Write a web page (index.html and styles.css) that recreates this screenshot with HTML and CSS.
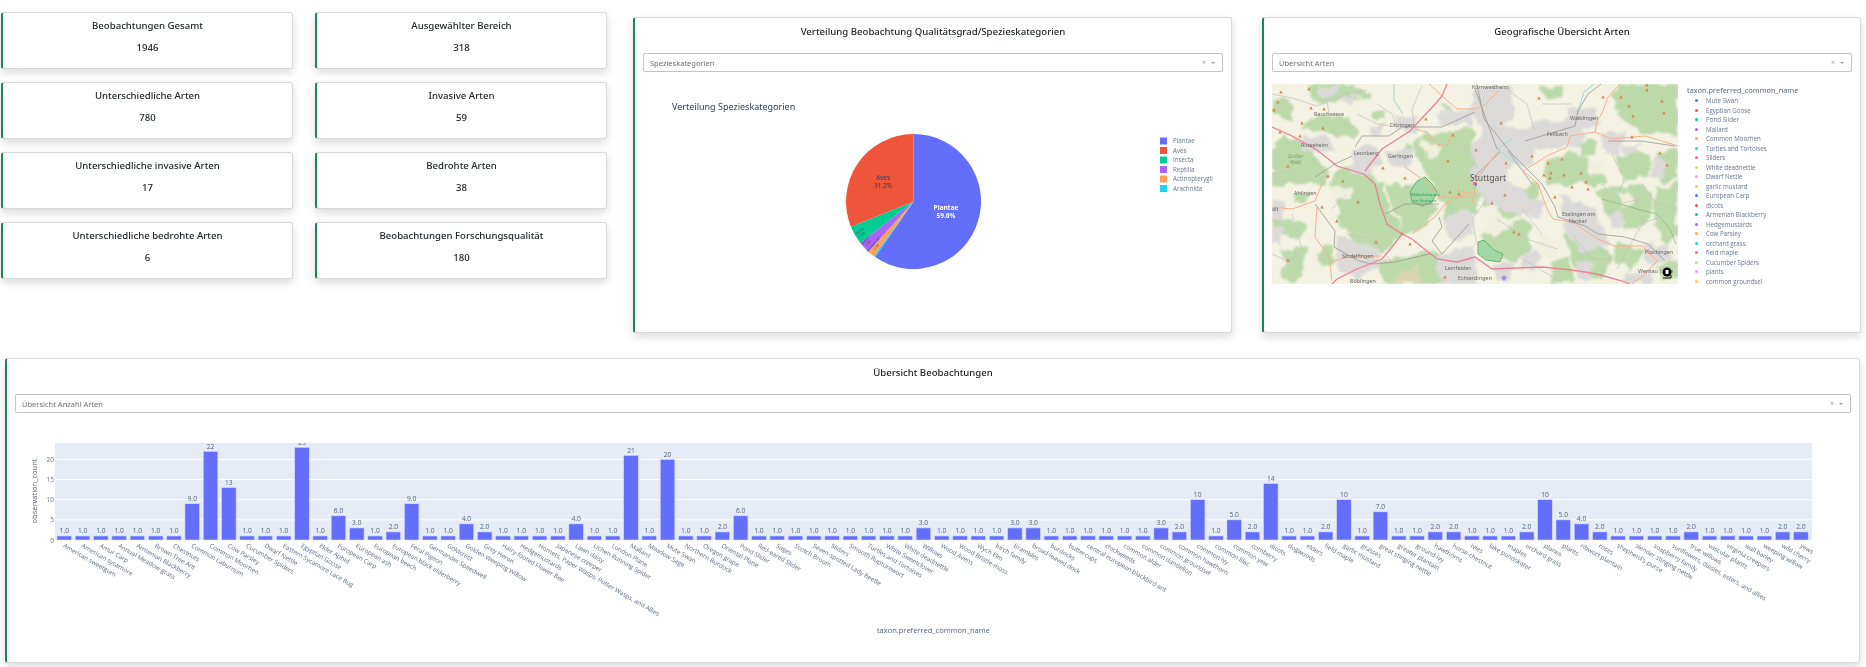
FILE: index.html
```html
<!DOCTYPE html>
<html lang="de">
<head>
<meta charset="utf-8">
<title>Beobachtungen</title>
<link rel="stylesheet" href="styles.css">
</head>
<body>
<div class="page">
  <div class="top">
    <div class="kpis">
      <div class="kpi"><div class="kpi-title">Beobachtungen Gesamt</div><div class="kpi-value">1946</div></div>
      <div class="kpi"><div class="kpi-title">Ausgewählter Bereich</div><div class="kpi-value">318</div></div>
      <div class="kpi"><div class="kpi-title">Unterschiedliche Arten</div><div class="kpi-value">780</div></div>
      <div class="kpi"><div class="kpi-title">Invasive Arten</div><div class="kpi-value">59</div></div>
      <div class="kpi"><div class="kpi-title">Unterschiedliche invasive Arten</div><div class="kpi-value">17</div></div>
      <div class="kpi"><div class="kpi-title">Bedrohte Arten</div><div class="kpi-value">38</div></div>
      <div class="kpi"><div class="kpi-title">Unterschiedliche bedrohte Arten</div><div class="kpi-value">6</div></div>
      <div class="kpi"><div class="kpi-title">Beobachtungen Forschungsqualität</div><div class="kpi-value">180</div></div>
    </div>
    <section class="card card-mid">
      <h2 class="card-title">Verteilung Beobachtung Qualitätsgrad/Spezieskategorien</h2>
      <div class="select"><span class="select-text">Spezieskategorien</span><span class="select-x">×</span><span class="select-caret"></span></div>
      <svg id="pie" class="pie" width="580" height="250" viewBox="0 0 580 250"></svg>
    </section>
    <section class="card card-mid">
      <h2 class="card-title">Geografische Übersicht Arten</h2>
      <div class="select"><span class="select-text">Übersicht Arten</span><span class="select-x">×</span><span class="select-caret"></span></div>
      <div class="geo">
        <svg class="map" width="406" height="200" viewBox="0 0 406 200">
          <defs>
            <filter id="organic" x="0" y="0" width="100%" height="100%">
              <feTurbulence type="fractalNoise" baseFrequency="0.07" numOctaves="3" seed="4" result="n"/>
              <feDisplacementMap in="SourceGraphic" in2="n" scale="13" xChannelSelector="R" yChannelSelector="G"/>
              <feGaussianBlur stdDeviation="0.8"/>
            </filter>
            <filter id="soft"><feGaussianBlur stdDeviation="0.5"/></filter>
          </defs>
          <rect class="m-land" width="406" height="200"/>
          <g filter="url(#organic)">
            <g class="m-green">
              <path d="M33,0 L82,0 L78,12 L60,20 L40,17Z"/><path d="M0,18 L10,12 L22,20 L18,35 L0,35Z"/>
              <path d="M30,48 L38,33 L62,30 L76,34 L84,46 L82,56 L68,50 L48,46Z"/><path d="M0,62 L16,50 L30,58 L46,76 L58,88 L50,100 L0,100Z"/>
              <path d="M170,22 L183,28 L183,38 L172,38Z"/><path d="M75,5 L100,8 L98,15 L80,14Z"/>
              <path d="M140,58 L160,50 L200,45 L203,100 L165,100 L150,88Z"/><path d="M355,0 L406,0 L406,48 L370,48 L345,30 L340,10Z"/>
              <path d="M270,2 L290,2 L288,14 L275,14Z"/><path d="M272,78 L300,68 L325,80 L335,100 L275,100Z"/>
              <path d="M345,72 L375,68 L378,90 L350,98Z"/><path d="M385,68 L406,66 L406,96 L390,98Z"/>
              <path d="M325,104 L368,100 L382,120 L375,140 L350,146 L332,125Z"/><path d="M382,104 L406,100 L406,150 L392,160 L384,140Z"/>
              <path d="M205,100 L240,100 L232,116 L212,122Z"/><path d="M244,104 L268,100 L262,125 L238,138 L226,128Z"/>
              <path d="M290,148 L320,160 L342,172 L332,196 L304,186Z"/>
              <path d="M210,150 L250,145 L262,165 L240,178 L215,170Z"/><path d="M55,100 L112,100 L118,130 L132,148 L118,165 L100,172 L85,165 L65,135 L68,120Z"/>
              <path d="M115,100 L150,100 L165,125 L150,145 L132,148 L120,125Z"/><path d="M165,100 L205,100 L205,130 L175,140Z"/>
              <path d="M10,165 L35,160 L32,185 L22,200 L12,195Z"/><path d="M105,180 L165,165 L185,195 L170,200 L115,200Z"/>
              <path d="M20,110 L40,105 L35,120 L20,122Z"/><path d="M212,12 L232,5 L240,18 L222,30Z"/>
              <path d="M58,100 L70,82 L100,86 L105,100Z"/><path d="M0,135 L20,132 L36,142 L25,156 L4,152Z"/>
              <path d="M280,178 L298,172 L302,198 L282,198Z"/><path d="M232,150 L250,135 L262,142 L245,158Z"/>
              <path d="M305,56 L325,58 L326,70 L308,72Z"/><path d="M345,156 L372,166 L360,186 L342,180Z"/>
              <path d="M385,182 L406,176 L406,196 L390,198Z"/><path d="M130,60 L140,62 L138,75 L128,72Z"/>
              <path d="M100,28 L112,26 L112,36 L102,36Z"/><path d="M62,160 L42,168 L50,182 L62,178Z"/>
            </g>
            <g class="m-pale">
              <path d="M212,135 L228,128 L232,146 L214,148Z"/><path d="M272,150 L290,158 L282,176 L268,168Z"/>
              <path d="M345,108 L360,106 L362,122 L348,124Z"/><path d="M60,105 L80,104 L82,114 L62,116Z"/>
              <path d="M150,58 L168,60 L164,72 L152,70Z"/><path d="M316,78 L330,76 L330,92 L318,92Z"/>
            </g>
            <path class="m-brown" d="M120,195 L145,182 L147,200 L122,200Z"/>
            <g class="m-urban">
              <path d="M202,8 L238,2 L242,30 L230,45 L262,45 L262,80 L240,78 L232,100 L255,105 L258,132 L235,128 L204,112 L198,75 L208,45 L198,25Z"/>
              <path d="M262,38 L305,35 L315,50 L300,65 L262,65Z"/><path d="M295,22 L322,25 L328,40 L310,45 L296,38Z"/>
              <path d="M120,30 L145,33 L145,48 L125,46Z"/><path d="M80,65 L100,60 L110,80 L90,90 L78,85Z"/>
              <path d="M112,65 L140,68 L135,85 L115,80Z"/><path d="M165,30 L200,25 L200,42 L170,42Z"/>
              <path d="M30,55 L58,52 L60,68 L35,68Z"/><path d="M65,150 L105,165 L108,180 L85,195 L65,185Z"/>
              <path d="M165,170 L203,165 L203,200 L170,200Z"/><path d="M288,112 L322,125 L338,162 L312,168 L292,148Z"/>
              <path d="M370,162 L395,160 L400,178 L375,180Z"/><path d="M350,190 L380,188 L378,200 L350,200Z"/>
              <path d="M0,118 L12,118 L10,135 L0,135Z"/><path d="M330,50 L350,52 L348,72 L332,70Z"/>
              <path d="M0,140 L14,145 L8,160 L0,158Z"/><path d="M172,135 L198,122 L202,148 L182,158Z"/>
              <path d="M48,2 L70,3 L62,14 L48,10Z"/><path d="M258,115 L272,118 L268,134 L256,130Z"/>
              <path d="M338,130 L350,126 L352,140 L340,144Z"/><path d="M306,178 L322,178 L318,196 L304,196Z"/>
              <path d="M70,12 L82,10 L82,20 L70,20Z"/><path d="M100,42 L112,40 L112,52 L102,52Z"/>
              <path d="M250,172 L266,166 L268,182 L252,186Z"/><path d="M220,182 L240,178 L240,194 L222,196Z"/>
              <path d="M380,75 L392,72 L394,90 L380,92Z"/><path d="M350,60 L370,60 L368,70 L352,70Z"/>
            </g>
          </g>
          <g filter="url(#soft)">
            <path class="m-park" d="M145,97 L153,93 L160,100 L165,108 L160,118 L150,122 L140,118 L138,108Z"/>
            <path class="m-park" d="M206,158 L212,156 L222,166 L231,170 L228,178 L214,176 L206,170Z"/>
            <path class="m-border" d="M330,115 L365,125 L385,130 L398,145 L404,160"/>
            <path class="m-water" d="M122,0 L122,16 L131,30"/>
            <path class="m-water" d="M305,30 L312,8 L322,0"/>
            <path class="m-water" d="M240,55 L225,65 L245,80"/>
            <g class="m-minor">
              <path d="M0,10 L20,14 L45,22 L75,10 L95,6"/><path d="M85,30 L105,40 L118,42"/><path d="M55,18 L58,34"/>
              <path d="M10,60 L30,58"/><path d="M0,90 L20,86 L30,100"/><path d="M105,20 L120,30 L125,45"/>
              <path d="M150,2 L140,25 L143,45"/><path d="M182,60 L200,70 L205,85"/><path d="M230,2 L255,20 L262,45"/>
              <path d="M270,20 L300,20"/><path d="M340,70 L352,95 L345,115"/><path d="M330,100 L345,120 L370,115"/>
              <path d="M370,100 L385,120 L403,125"/><path d="M300,150 L320,175 L340,175"/><path d="M285,165 L255,155 L225,135"/>
              <path d="M250,125 L270,150"/><path d="M215,115 L200,135 L205,160"/><path d="M180,130 L170,105"/>
              <path d="M120,178 L100,155 L75,150"/><path d="M20,130 L30,165 L10,185"/><path d="M0,170 L18,178"/>
              <path d="M75,110 L60,125"/><path d="M345,185 L370,140 L395,130"/><path d="M240,168 L285,196"/>
            </g>
            <g class="m-rail">
              <path d="M83,63 L90,52 L117,52 L130,43 L170,43 L203,28"/><path d="M43,93 L63,80 L80,72"/>
              <path d="M43,120 L63,147 L62,163 L87,177 L100,180 L123,178 L157,170"/><path d="M113,130 L133,120 L167,120"/>
              <path d="M167,133 L170,143 L160,157 L170,170 L197,140"/><path d="M253,57 L303,42 L306,27 L316,10 L329,0"/>
              <path d="M336,57 L369,57 L403,62"/><path d="M203,5 L225,65"/><path d="M270,100 L283,123 L286,133 L313,142 L326,150 L353,153 L376,160 L393,177"/>
              <path d="M236,67 L260,100"/><path d="M228,68 L200,95"/><path d="M205,0 L212,35 L240,70 L270,100"/>
            </g>
            <g class="m-orange">
              <path d="M157,0 L170,12 L185,25 L203,25 L213,21 L223,10 L227,7"/><path d="M143,45 L155,48 L165,60 L175,62 L180,50"/>
              <path d="M133,83 L157,100 L165,110 L168,115"/><path d="M348,0 L336,13 L331,27 L325,38 L323,48 L298,52 L295,63 L275,72 L251,87"/>
              <path d="M323,48 L340,55 L360,53 L373,52 L390,57 L406,62"/><path d="M251,87 L266,100 L276,127 L281,135 L300,138 L326,155 L343,162 L370,162 L385,177 L373,190 L360,200"/>
              <path d="M45,123 L43,153 L57,173 L60,197"/><path d="M0,123 L20,125 L43,117 L50,100"/><path d="M58,178 L80,172 L110,172"/>
              <path d="M140,150 L163,133 L173,120 L200,107"/><path d="M167,113 L203,113"/><path d="M228,65 L205,95 L200,120"/>
              <path d="M186,100 L186,107 L205,110"/>
            </g>
            <g class="m-motor">
              <path d="M0,43 L20,52 L45,66 L65,82 L75,85 L92,90 L103,100 L108,120 L115,140 L130,150 L140,155 L165,175 L185,178 L203,173 L220,185 L245,184 L270,183 L300,186 L325,190 L350,197 L358,200"/>
              <path d="M93,87 L110,65 L138,47 L165,18 L170,12 L175,0"/><path d="M130,150 L120,163 L110,175 L85,185 L65,195 L60,200"/>
            </g>
            <g class="m-label">
              <text x="200" y="5">Kornwestheim</text><text x="298" y="36">Waiblingen</text><text x="275" y="52">Fellbach</text>
              <text x="118" y="43">Ditzingen</text><text x="116" y="74">Gerlingen</text><text x="82" y="71">Leonberg</text>
              <text x="29" y="63">Rutesheim</text><text x="42" y="32">Rauchwiese</text><text x="22" y="111">Ahlingen</text>
              <text x="70" y="174">Sindelfingen</text><text x="78" y="199">Böblingen</text><text x="173" y="186">Leinfelden</text>
              <text x="186" y="196">Echterdingen</text><text x="290" y="132">Esslingen am</text><text x="297" y="139">Neckar</text>
              <text x="373" y="170">Plochingen</text><text x="366" y="189">Wernau | B|a</text><text x="16" y="74" class="m-wood">Großer</text><text x="18" y="80" class="m-wood">Wald</text>
              <text x="139" y="112" class="m-parktext">Wildschutzpark</text><text x="141" y="118" class="m-parktext">bei Stuttgart</text>
              <text x="198" y="97" class="m-city">Stuttgart</text><text x="0" y="127">alt</text>
            </g>
            <g id="markers" class="m-marker"></g>
            <rect x="201" y="98" width="3" height="3" class="m-pink"/><rect x="203" y="99" width="2" height="3" class="m-blue"/>
            <path d="M232,191 L235,194 L232,197 L229,194Z" class="m-purple"/>
          </g>
          <circle cx="395" cy="188" r="4.5"/>
          <rect x="393.5" y="186" width="3" height="4" class="m-icon-in"/>
          <path d="M391,194 H399 V191" class="m-icon-corner"/>
        </svg>
        <div class="geo-legend">
          <div class="geo-legend-title">taxon.preferred_common_name</div>
          <ul id="geoLegend" class="geo-list"></ul>
        </div>
      </div>
    </section>
  </div>
  <section class="card card-wide">
    <h2 class="card-title">Übersicht Beobachtungen</h2>
    <div class="select"><span class="select-text">Übersicht Anzahl Arten</span><span class="select-x">×</span><span class="select-caret"></span></div>
    <svg id="bars" class="bars" width="1835" height="242" viewBox="0 0 1835 242"></svg>
  </section>
</div>
<script src="charts.js"></script>
</body>
</html>
```
FILE: styles.css
```css
* { box-sizing: border-box; }
html, body { margin: 0; padding: 0; background: #fff; }
body { font-family: "Noto Sans", "Open Sans", sans-serif; color: #212529; overflow: hidden; }
.page { width: 1866px; height: 667px; overflow: hidden; filter: blur(0.3px); }
.top { display: flex; align-items: flex-start; height: 358px; padding: 12px 0 0 1px; }
.kpis { display: grid; grid-template-columns: 292px 292px; column-gap: 22px; row-gap: 13px; width: 606px; margin-right: 26px; }
.kpi { height: 57px; padding-top: 5.5px; text-align: center; background: #fff; border: 1px solid #d8d8d8; border-left: 2px solid #198754; border-radius: 3px; box-shadow: 0 4px 9px rgba(0, 0, 0, .14); }
.kpi-title, .kpi-value { font-size: 9.6px; line-height: 14px; font-weight: 500; }
.kpi-value { margin-top: 8px; }
.card { background: #fff; border: 1px solid #d8d8d8; border-left: 2px solid #198754; border-radius: 3px; box-shadow: 0 4px 9px rgba(0, 0, 0, .14); padding: 6.5px 8px 0; }
.card-mid { width: 599px; height: 316px; margin-top: 5px; margin-right: 30px; flex: none; }
.card-wide { width: 1855px; height: 305px; margin-left: 5px; }
.card-title { margin: 0 0 14.5px; font-size: 9.6px; line-height: 14px; font-weight: 500; text-align: center; color: #212529; }
.select { display: flex; align-items: center; height: 19px; padding: 0 7px 0 6px; border: 1px solid #c4c4c4; border-radius: 2px; background: #fff; font-size: 7.5px; color: #6b6f73; }
.select-text { flex: 1; }
.select-x { font-size: 7px; color: #999; margin-right: 5px; }
.select-caret { width: 0; height: 0; border: 2px solid transparent; border-top: 2.5px solid #999; border-bottom: 0; }
.pie { display: block; margin-top: 4px; }
.bars { display: block; margin-top: 6px; }
.geo { display: flex; margin-top: 12px; }
.map { display: block; flex: none; }
.geo-legend { margin-left: 9px; font-family: "Open Sans", sans-serif; color: #50617c; }
.geo-legend-title { font-size: 7.4px; line-height: 12px; }
.geo-list { list-style: none; margin: 0; padding: 0; }
.geo-item { display: flex; align-items: center; height: 9.5px; font-size: 6.2px; color: #66758e; }
.geo-dot { width: 3px; height: 3px; border-radius: 50%; margin: 0 8px 0 8px; flex: none; }

/* plotly-like charts */
.plot-text { font-family: "Open Sans", sans-serif; fill: #2a3f5f; }
.plot-text.pie-title { font-size: 9px; font-family: "Noto Sans", sans-serif; fill: #2a3f5f; }
.pie-in { font-size: 6.5px; text-anchor: middle; }
.plot-text.pie-in-white { fill: #fff; font-weight: 700; }
.plot-text.pie-tiny { font-size: 3px; text-anchor: middle; fill: #444; }
.plot-text.pie-legend { font-size: 6.2px; fill: #66758e; }
.plot-bg { fill: #e5ecf6; }
.grid-line { stroke: #fff; stroke-width: 1; }
.bar { fill: #636efa; stroke: #d6dcf8; stroke-width: .6; }
.plot-text.bar-value { font-size: 6.7px; text-anchor: middle; fill: #50617c; }
.plot-text.tick-y { font-size: 6.5px; text-anchor: end; fill: #66758e; }
.plot-text.tick-x { font-size: 6.3px; fill: #5c6b84; }
.plot-text.axis-title { font-size: 7.5px; text-anchor: middle; fill: #50617c; }

/* map */
.m-land { fill: #f4f2e2; }
.m-green { fill: #bcd9aa; }
.m-pale { fill: #f1f0dc; }
.m-brown { fill: #d8d6b2; }
.m-urban { fill: #dbdad9; }
.m-park { fill: #a3d6a5; stroke: #66b56f; stroke-width: 1; }
.m-border { fill: none; stroke: #7cb67c; stroke-width: .7; }
.m-water { fill: none; stroke: #a9dcd8; stroke-width: 1.1; }
.m-minor { fill: none; stroke: #c4c2bc; stroke-width: .7; }
.m-rail { fill: none; stroke: #999; stroke-width: .8; }
.m-orange { fill: none; stroke: #f8b08c; stroke-width: 1; }
.m-motor { fill: none; stroke: #ea8295; stroke-width: 1.3; }
.m-label { font-family: "Noto Sans", sans-serif; font-size: 5.4px; fill: #666; }
.m-label .m-city { font-size: 8.6px; fill: #555; }
.m-label .m-wood { font-size: 4.6px; fill: #7c9a74; }
.m-label .m-parktext { font-size: 4px; fill: #2e9a4a; }
.m-marker { fill: #d98a4c; }
.m-pink { fill: #ff6692; }
.m-blue { fill: #3f8cf0; }
.m-purple { fill: #a98cf0; }
.m-icon-in { fill: #fff; }
.m-icon-corner { fill: none; stroke: #111; stroke-width: 1; }
```
FILE: charts.js
```js
var PALETTE = ['#636efa', '#EF553B', '#00cc96', '#ab63fa', '#FFA15A', '#19d3f3', '#FF6692', '#B6E880', '#FF97FF', '#FECB52'];

/* ---------- pie ---------- */
(function () {
  var cx = 270.5, cy = 125.5, r = 67.5;
  var slices = [
    ['Plantae', 0, 214.6, '#636efa'], ['Arachnida', 214.6, 216, '#19d3f3'], ['Actinopterygii', 216, 222, '#FFA15A'],
    ['Reptilia', 222, 232, '#ab63fa'], ['Insecta', 232, 248, '#00cc96'], ['Aves', 248, 360, '#EF553B']
  ];
  function pt(a) {
    var t = a * Math.PI / 180;
    return (cx + r * Math.sin(t)).toFixed(2) + ',' + (cy - r * Math.cos(t)).toFixed(2);
  }
  var h = '<text class="plot-text pie-title" x="29" y="33.5">Verteilung Spezieskategorien</text>';
  slices.forEach(function (s) {
    h += '<path fill="' + s[3] + '" d="M' + cx + ',' + cy + ' L' + pt(s[1]) + ' A' + r + ',' + r + ' 0 ' + (s[2] - s[1] > 180 ? 1 : 0) + ' 1 ' + pt(s[2]) + 'Z"/>';
  });
  h += '<text class="plot-text pie-in pie-in-white" x="303" y="134">Plantae</text><text class="plot-text pie-in pie-in-white" x="303" y="142">59.6%</text>';
  h += '<text class="plot-text pie-in" x="240" y="103.5">Aves</text><text class="plot-text pie-in" x="240" y="111.5">31.2%</text>';
  [[217, 156, -35, 'Insecta', '4.3%'], [223, 165, -48, 'Reptilia', '2.9%'], [231, 169, -52, 'Actinopterygii', '2.0%']].forEach(function (l) {
    h += '<g transform="translate(' + l[0] + ',' + l[1] + ') rotate(' + l[2] + ')"><text class="plot-text pie-tiny">' + l[3] + '</text><text class="plot-text pie-tiny" y="4">' + l[4] + '</text></g>';
  });
  ['Plantae', 'Aves', 'Insecta', 'Reptilia', 'Actinopterygii', 'Arachnida'].forEach(function (n, i) {
    var y = 65 + i * 9.5;
    h += '<rect x="517" y="' + (y - 3.5) + '" width="7" height="7" fill="' + PALETTE[i] + '"/>';
    h += '<text class="plot-text pie-legend" x="530" y="' + (y + 2.2) + '">' + n + '</text>';
  });
  document.getElementById('pie').innerHTML = h;
})();

/* ---------- geo legend + markers ---------- */
(function () {
  var names = ['Mute Swan', 'Egyptian Goose', 'Pond Slider', 'Mallard', 'Common Moorhen', 'Turtles and Tortoises', 'Sliders', 'White deadnettle', 'Dwarf Nettle', 'garlic mustard', 'European Carp', 'dicots', 'Armenian Blackberry', 'Hedgemustards', 'Cow Parsley', 'orchard grass', 'field maple', 'Cucumber Spiders', 'plants', 'common groundsel'];
  var list = document.getElementById('geoLegend');
  names.forEach(function (n, i) {
    var li = document.createElement('li');
    li.className = 'geo-item';
    var dot = document.createElement('span');
    dot.className = 'geo-dot';
    dot.style.background = PALETTE[i % 10];
    li.appendChild(dot);
    li.appendChild(document.createTextNode(n));
    list.appendChild(li);
  });
  var pts = [[9,8],[37,5],[6,18],[2,26],[39,24],[52,25],[30,39],[51,44],[8,48],[28,52],[16,82],[56,92],[71,97],[111,84],[133,94],[176,77],[154,35],[181,51],
    [267,14],[331,13],[349,13],[375,1],[375,6],[390,17],[357,22],[361,32],[392,29],[229,39],[204,66],[260,72],[234,79],[276,79],[290,75],[360,53],[388,69],[395,81],[279,89],[272,91],[292,91],[309,89],[314,98],[278,94],
    [86,118],[50,123],[65,137],[104,158],[16,176],[130,149],[138,160],[178,108],[187,110],[173,193],[300,103],[316,105],[283,113],[233,111],[220,119],[242,148],[247,150]];
  document.getElementById('markers').innerHTML = pts.map(function (p) {
    return '<path d="M' + p[0] + ',' + (p[1] - 1.8) + ' l1.8,3.4 h-3.6Z"/>';
  }).join('');
})();

/* ---------- bars ---------- */
(function () {
  var data = [['American sweetgum',1],['American sycamore',1],['Amur Carp',1],['Annual Meadow-grass',1],['Armenian Blackberry',1],['Brown Tree Ant',1],['Chestnuts',1],['Common Laburnum',9],['Common Moorhen',22],['Cow Parsley',13],['Cucumber Spiders',1],['Dwarf Nettle',1],['Eastern Sycamore Lace Bug',1],['Egyptian Goose',23],['Elder Aphid',1],['European Carp',6],['European ash',3],['European beech',1],['European black elderberry',2],['Feral Pigeon',9],['Germander Speedwell',1],['Goldcrest',1],['Golden Weeping Willow',4],['Grey Heron',2],['Hairy-footed Flower Bee',1],['Hedgemustards',1],['Hornets, Paper Wasps, Potter Wasps, and Allies',1],['Japanese creeper',1],['Lawn daisy',4],['Lichen Running Spider',1],['London Plane',1],['Mallard',21],['Meadow Sage',1],['Mute Swan',20],['Northern Burdock',1],['Oregon grape',1],['Oriental Plane',2],['Pond Slider',6],['Red-eared Slider',1],['Sages',1],['Scotch Broom',1],['Seven-spotted Lady Beetle',1],['Sliders',1],['Smooth Rupturewort',1],['Turtles and Tortoises',1],['White Sweetclover',1],['White deadnettle',1],['Willows',3],['Wood Avens',1],['Wood Bristle-moss',1],['Wych Elm',1],['birch family',1],['brambles',3],['broad-leaved dock',3],['burdocks',1],['buttercups',1],['central european blackbird ant',1],['chickweeds',1],['common alder',1],['common dandelion',1],['common groundsel',3],['common hawthorn',2],['common ivy',10],['common lilac',1],['common yew',5],['cornberry',2],['dicots',14],['dogwoods',1],['elders',1],['field maple',2],['garlic mustard',10],['grasses',1],['great stinging nettle',7],['greater plantain',1],['ground-ivy',1],['hawthorns',2],['horse-chestnut',2],['ivies',1],['lake pondskater',1],['maples',1],['orchard grass',2],['planes',10],['plants',5],['ribwort plantain',4],['roses',2],["shepherd's-purse",1],['slender stinging nettle',1],['soapberry family',1],['sunflowers, daisies, asters, and allies',1],['true willows',2],['vascular plants',1],['virginia creepers',1],['wall barley',1],['weeping willow',1],['wild cherry',2],['yews',2]];
  var ox = -15, oy = -420;
  var left = 55 + ox, right = 1812 + ox, top = 444 + oy, base = 541 + oy, unit = 4.03;
  var first = 64.3 + ox, step = 18.28, w = 14.6;
  var h = '<defs><clipPath id="plotClip"><rect x="' + left + '" y="' + top + '" width="' + (right - left) + '" height="' + (base - top + 1) + '"/></clipPath></defs>';
  h += '<rect class="plot-bg" x="' + left + '" y="' + top + '" width="' + (right - left) + '" height="' + (base - top) + '"/>';
  [0, 5, 10, 15, 20].forEach(function (v) {
    var y = base - v * unit;
    if (v) h += '<line class="grid-line" x1="' + left + '" x2="' + right + '" y1="' + y + '" y2="' + y + '"/>';
    h += '<text class="plot-text tick-y" x="' + (left - 1) + '" y="' + (y + 2.5) + '">' + v + '</text>';
  });
  h += '<g clip-path="url(#plotClip)">';
  data.forEach(function (d, i) {
    var cx = first + i * step, y = base - d[1] * unit;
    h += '<rect class="bar" x="' + (cx - w / 2) + '" y="' + y + '" width="' + w + '" height="' + (base - y) + '"/>';
    h += '<text class="plot-text bar-value" x="' + cx + '" y="' + (y - 2.8) + '">' + (d[1] < 10 ? d[1].toFixed(1) : d[1]) + '</text>';
  });
  h += '</g>';
  data.forEach(function (d, i) {
    var cx = first + i * step;
    h += '<text class="plot-text tick-x" transform="translate(' + (cx - 1.5) + ',' + (548 + oy) + ') rotate(30)">' + d[0] + '</text>';
  });
  h += '<text class="plot-text axis-title" transform="translate(' + (37 + ox) + ',' + (492 + oy) + ') rotate(-90)">observation_count</text>';
  h += '<text class="plot-text axis-title" x="' + (933.4 + ox) + '" y="' + (633.5 + oy) + '">taxon.preferred_common_name</text>';
  document.getElementById('bars').innerHTML = h;
})();
```
